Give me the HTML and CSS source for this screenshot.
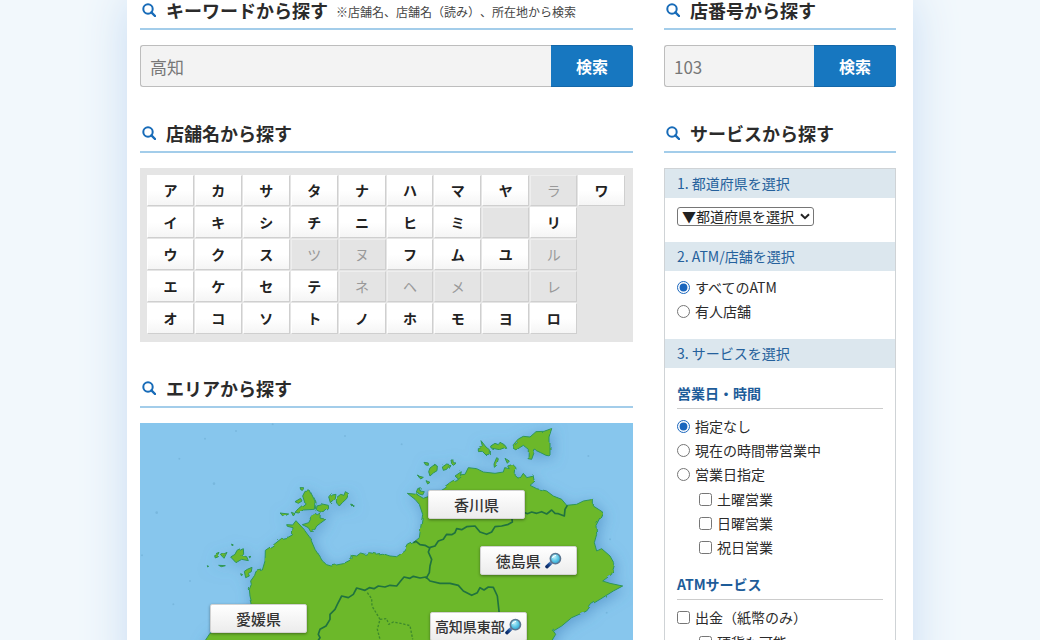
FILE: index.html
```html
<!DOCTYPE html>
<html lang="ja">
<head>
<meta charset="utf-8">
<meta name="viewport" content="width=device-width, initial-scale=1">
<title>店舗・ATM検索</title>
<link rel="stylesheet" href="styles.css">
</head>
<body>
<svg class="defs" width="0" height="0" aria-hidden="true">
  <symbol id="search" viewBox="0 0 14 14">
    <circle cx="6" cy="6" r="4.7" fill="none" stroke="currentColor" stroke-width="2"/>
    <path d="M9.4 9.4 13 13" stroke="currentColor" stroke-width="2.4" stroke-linecap="round"/>
  </symbol>
  <linearGradient id="handle-fill" x1="1" y1="0" x2="0" y2="1">
    <stop offset="0" stop-color="#6d94c8"/><stop offset=".5" stop-color="#174a94"/><stop offset="1" stop-color="#0b2a66"/>
  </linearGradient>
  <radialGradient id="lens-fill" cx=".4" cy=".35" r=".7">
    <stop offset="0" stop-color="#bdf1fb"/><stop offset=".6" stop-color="#55c3e4"/><stop offset="1" stop-color="#2f9fd0"/>
  </radialGradient>
  <symbol id="lens" viewBox="0 0 16 16">
    <path d="M1.8 13.8 6 9.8" stroke="url(#handle-fill)" stroke-width="3.2" stroke-linecap="round"/>
    <circle cx="9.8" cy="6.2" r="4.8" fill="url(#lens-fill)" stroke="#5c7690" stroke-width="1.5"/>
    <path d="M7.2 5.2Q8 3.4 10 3.3" fill="none" stroke="#fff" stroke-width="1" stroke-linecap="round"/>
  </symbol>
</svg>

<main class="page">
  <div class="column">
    <section>
      <h2 class="heading"><svg class="heading-icon"><use href="#search"/></svg><label for="keyword">キーワードから探す</label><small class="note">※店舗名、店舗名（読み）、所在地から検索</small></h2>
      <form class="search">
        <input class="search-input" id="keyword" type="text" placeholder="高知">
        <button class="search-button" type="button">検索</button>
      </form>
    </section>

    <section>
      <h2 class="heading"><svg class="heading-icon"><use href="#search"/></svg>店舗名から探す</h2>
      <div class="kana">
        <a class="key" href="#">ア</a><a class="key" href="#">カ</a><a class="key" href="#">サ</a><a class="key" href="#">タ</a><a class="key" href="#">ナ</a><a class="key" href="#">ハ</a><a class="key" href="#">マ</a><a class="key" href="#">ヤ</a><span class="key off">ラ</span><a class="key" href="#">ワ</a>
        <a class="key" href="#">イ</a><a class="key" href="#">キ</a><a class="key" href="#">シ</a><a class="key" href="#">チ</a><a class="key" href="#">ニ</a><a class="key" href="#">ヒ</a><a class="key" href="#">ミ</a><span class="key off"></span><a class="key" href="#">リ</a><span></span>
        <a class="key" href="#">ウ</a><a class="key" href="#">ク</a><a class="key" href="#">ス</a><span class="key off">ツ</span><span class="key off">ヌ</span><a class="key" href="#">フ</a><a class="key" href="#">ム</a><a class="key" href="#">ユ</a><span class="key off">ル</span><span></span>
        <a class="key" href="#">エ</a><a class="key" href="#">ケ</a><a class="key" href="#">セ</a><a class="key" href="#">テ</a><span class="key off">ネ</span><span class="key off">ヘ</span><span class="key off">メ</span><span class="key off"></span><span class="key off">レ</span><span></span>
        <a class="key" href="#">オ</a><a class="key" href="#">コ</a><a class="key" href="#">ソ</a><a class="key" href="#">ト</a><a class="key" href="#">ノ</a><a class="key" href="#">ホ</a><a class="key" href="#">モ</a><a class="key" href="#">ヨ</a><a class="key" href="#">ロ</a><span></span>
      </div>
    </section>

    <section>
      <h2 class="heading"><svg class="heading-icon"><use href="#search"/></svg>エリアから探す</h2>
      <div class="map">
        <svg class="map-art" viewBox="30 191 1479 780" aria-hidden="true">
          <defs>
            <filter id="shade" x="-10%" y="-10%" width="120%" height="120%">
              <feTurbulence type="fractalNoise" baseFrequency=".04" numOctaves="1" seed="4" result="n"/>
              <feDisplacementMap in="SourceGraphic" in2="n" scale="10" result="land"/>
              <feGaussianBlur in="land" stdDeviation="20" result="b"/>
              <feOffset in="b" dx="6" dy="8" result="o"/>
              <feFlood flood-color="#4684bd" flood-opacity=".6"/>
              <feComposite in2="o" operator="in" result="s"/>
              <feMerge><feMergeNode in="s"/><feMergeNode in="land"/></feMerge>
            </filter>
          </defs>
          <rect x="30" y="191" width="1479" height="780" fill="#87c6ed"/>
          <g fill="#6faed4" opacity=".6">
            <circle cx="252" cy="373" r="4"/><circle cx="80" cy="460" r="4"/><circle cx="318" cy="215" r="3"/><circle cx="148" cy="298" r="3"/><circle cx="225" cy="238" r="3"/><circle cx="428" cy="195" r="3"/><circle cx="36" cy="588" r="3"/><circle cx="130" cy="735" r="3"/><circle cx="645" cy="230" r="3"/><circle cx="815" cy="255" r="3"/><circle cx="1440" cy="540" r="3"/><circle cx="1375" cy="290" r="3"/><circle cx="1430" cy="760" r="3"/><circle cx="180" cy="665" r="3"/>
          </g>
          <g filter="url(#shade)">
            <path fill="#6cb82c" stroke="#2f9657" stroke-width="3" stroke-linejoin="round" d="M190 990 215 860 240 822 300 800 345 770 366 735 360 710 358 690 364 675 362 665 374 648 378 636 397 632 405 605 406 573 430 557 455 537 476 533 487 527 489 505 472 501 470 496 488 497 498 484 507 494 520 508 540 535 555 570 579 607 590 616 603 620 640 613 665 600 667 588 680 590 692 581 705 585 718 580 740 584 755 582 780 590 800 592 825 575 835 557 850 550 868 535 872 505 878 465 868 435 855 420 832 402 860 405 880 417 900 410 940 385 965 366 980 360 985 347 1005 345 1015 325 1040 328 1060 338 1095 342 1120 338 1124 325 1138 328 1133 320 1148 315 1158 325 1155 348 1168 360 1180 342 1190 355 1212 350 1215 365 1200 378 1220 388 1250 395 1270 410 1295 420 1310 438 1340 435 1360 425 1390 420 1390 440 1418 458 1410 475 1398 498 1400 525 1393 550 1400 575 1415 568 1440 590 1454 615 1445 645 1418 665 1440 672 1478 680 1450 695 1410 720 1385 735 1370 755 1325 775 1295 800 1270 815 1277 825 1265 845 1240 900 1210 990Z"/>
            <g fill="#6cb82c" stroke="#2f9657" stroke-width="3" stroke-linejoin="round">
              <path d="M525 396 540 395 555 425 553 450 520 452 505 461 495 459 505 448 525 432 518 410ZM495 427 512 417 516 425 505 432ZM507 382 518 382 520 390 510 389ZM450 461 476 464 460 472ZM484 459 495 463 490 470ZM558 437 572 433 595 438 596 448 582 460 568 457 556 448ZM596 412 604 404 615 402 612 420 601 430ZM618 416 632 405 642 408 646 397 656 403 650 418 637 430 628 440 620 431ZM662 434 670 437 665 440ZM540 468 553 461 562 466 571 461 570 476 587 480 572 491 560 500 552 515 542 517 535 505 517 496 536 490 541 481Z"/>
              <path d="M302 593 315 585 321 573 337 565 338 582 332 587 350 592 355 604 335 600 318 610ZM254 589 270 582 265 592 256 596ZM274 588 291 579 282 597ZM266 618 286 619 274 622ZM305 554 310 557 306 559ZM232 619 236 621 233 623ZM357 591 366 595 360 599ZM343 636 352 630 366 624 364 637 355 642 358 650 347 655ZM332 643 338 646 334 649Z"/>
              <path d="M1150 256 1165 239 1180 231 1200 233 1218 217 1242 216 1264 208 1268 211 1260 236 1260 290 1248 288 1232 280 1215 272 1205 300 1194 298 1195 270 1180 258 1158 272 1149 266ZM1082 260 1095 252 1105 256 1110 249 1123 256 1127 264 1108 271 1083 266ZM1045 268 1058 264 1053 244 1068 263 1078 271 1078 284 1068 287 1057 276 1045 277ZM1100 295 1105 298 1100 318 1093 324 1092 314ZM1125 297 1138 305 1132 312Z"/>
              <path d="M900 326 912 317 922 320 921 334 910 341 900 350 896 337ZM882 309 895 311 895 318 887 317ZM937 323 950 314 960 316 950 330 940 333ZM960 299 968 299 970 310 979 311 970 318 962 310ZM865 350 880 354 872 359ZM888 364 900 369 893 374ZM975 350 994 337 991 350 982 356ZM866 391 874 388 870 395 883 397 878 407 862 402Z"/>
            </g>
          </g>
          <g fill="none" stroke="#20723f" stroke-width="5" stroke-linejoin="round">
            <path d="M850 550 858 546 870 556 885 558 898 565 915 560 925 545 940 540 950 525 965 526 975 520 980 508 995 511 1010 502 1035 500 1050 518 1070 525 1085 518 1095 502 1115 500 1135 495 1147 488 1145 470M1145 468 1165 465 1180 458 1192 463 1205 458 1220 462 1235 457 1250 464 1265 452 1275 462 1285 463 1303 470 1305 450 1312 438M900 565 895 578 905 600 900 620 898 640 888 658"/>
            <path d="M560 850 570 835 565 825 570 810 588 800 600 780 600 765 615 750 622 735 635 710 655 715 670 705 680 686 705 693 718 685 732 688 745 680 765 683 780 678 800 680 812 665 822 653 840 657 850 651 870 656 888 653 900 665 930 672 960 672 985 678 1000 695 1025 708 1042 700 1050 685 1062 692 1075 683 1090 684 1102 710 1107 755 1110 800"/>
            <path stroke="#3d8a2c" stroke-width="4" stroke-dasharray="7 5" d="M712 700 725 718 726 740 738 760 750 780 742 810 750 840 738 880M750 780 770 778 776 795 790 788 812 792 840 799 848 840"/>
          </g>
        </svg>
        <a class="area kagawa" href="#">香川県</a>
        <a class="area tokushima" href="#">徳島県<svg class="lens"><use href="#lens"/></svg></a>
        <a class="area ehime" href="#">愛媛県</a>
        <a class="area kochi" href="#">高知県東部<svg class="lens"><use href="#lens"/></svg></a>
      </div>
    </section>
  </div>

  <div class="column side">
    <section>
      <h2 class="heading"><svg class="heading-icon"><use href="#search"/></svg><label for="number">店番号から探す</label></h2>
      <form class="search">
        <input class="search-input" id="number" type="text" placeholder="103">
        <button class="search-button" type="button">検索</button>
      </form>
    </section>

    <section>
      <h2 class="heading"><svg class="heading-icon"><use href="#search"/></svg>サービスから探す</h2>
      <form class="panel">
        <h3 class="step"><label for="pref">1. 都道府県を選択</label></h3>
        <div class="select-row">
          <div class="select-wrap">
            <select class="pref" id="pref"><option>▼都道府県を選択</option></select>
            <svg class="chevron" viewBox="0 0 10 7" aria-hidden="true"><path d="M1 1.2 5 5.2 9 1.2" fill="none" stroke="#222" stroke-width="2"/></svg>
          </div>
        </div>
        <h3 class="step">2. ATM/店舗を選択</h3>
        <div class="options kinds">
          <label class="option"><input type="radio" name="kind" checked>すべてのATM</label>
          <label class="option"><input type="radio" name="kind">有人店舗</label>
        </div>
        <h3 class="step">3. サービスを選択</h3>
        <div class="group">
          <h4 class="group-title">営業日・時間</h4>
          <div class="options">
            <label class="option"><input type="radio" name="hours" checked>指定なし</label>
            <label class="option"><input type="radio" name="hours">現在の時間帯営業中</label>
            <label class="option"><input type="radio" name="hours">営業日指定</label>
            <div class="suboptions">
              <label class="option"><input type="checkbox">土曜営業</label>
              <label class="option"><input type="checkbox">日曜営業</label>
              <label class="option"><input type="checkbox">祝日営業</label>
            </div>
          </div>
        </div>
        <div class="group">
          <h4 class="group-title">ATMサービス</h4>
          <div class="options">
            <label class="option"><input type="checkbox">出金（紙幣のみ）</label>
            <div class="suboptions">
              <label class="option"><input type="checkbox">硬貨も可能</label>
            </div>
          </div>
        </div>
      </form>
    </section>
  </div>
</main>
</body>
</html>
```
FILE: styles.css
```css
* { box-sizing: border-box; }

body {
  margin: 0;
  height: 100vh;
  overflow: hidden;
  background: #f2f8fc;
  color: #2b2b2b;
  font-family: "Noto Sans CJK JP", sans-serif;
  font-size: 14px;
  text-spacing-trim: space-all;
}

h2, h3, h4 { margin: 0; }

.defs { position: absolute; }

.page {
  display: flex;
  gap: 31px;
  max-width: 786px;
  min-height: 100vh;
  margin: 0 auto;
  padding: 0 17px 0 13px;
  background: #fff;
  box-shadow: 0 0 44px #c8dcf3;
}

.column {
  display: flex;
  flex: 1;
  flex-direction: column;
  gap: 36px;
  min-width: 0;
}

.side { flex: 0 0 232px; }

.heading {
  display: flex;
  align-items: center;
  margin-bottom: 15px;
  padding: 0 0 8px 2px;
  border-bottom: 2px solid #a3cdea;
  font-size: 18px;
  line-height: 20px;
  white-space: nowrap;
}

.heading-icon {
  width: 14px;
  height: 14px;
  margin-right: 10px;
  color: #176bb8;
}

.note {
  margin: 4px 0 0 8px;
  color: #444;
  font-size: 12px;
  font-weight: 400;
  line-height: 16px;
}

.search { display: flex; height: 42px; }

.search-input {
  flex: 1;
  min-width: 0;
  padding: 0 9px;
  border: 1px solid #bdbdbd;
  border-right: 0;
  border-radius: 3px 0 0 3px;
  background: #f3f3f3;
  color: #777;
  font: inherit;
  font-size: 17px;
}

.search-input::placeholder { color: #777; }

.search-button {
  width: 82px;
  border: 1px solid #1467a8;
  border-width: 1px 0;
  border-radius: 0 3px 3px 0;
  background: #1777c0;
  color: #fff;
  font: inherit;
  font-size: 16px;
  font-weight: 700;
}

.kana {
  display: grid;
  grid-template-columns: repeat(10, 1fr);
  grid-auto-rows: 32px;
  padding: 7px;
  background: #e5e5e5;
}

.key {
  border: 1px solid #fff;
  border-right-color: #cfcfcf;
  border-bottom-color: #cfcfcf;
  margin: 0 1px 1px 0;
  background: linear-gradient(#fff 50%, #f5f5f5);
  color: #222;
  font-size: 14px;
  font-weight: 700;
  line-height: 28px;
  text-align: center;
  text-decoration: none;
}

.off {
  border-top-color: #eee;
  border-left-color: #eee;
  background: #e4e4e4;
  color: #999;
  font-weight: 400;
}

.map { position: relative; }

.map-art { display: block; width: 100%; }

.area {
  position: absolute;
  display: flex;
  align-items: center;
  justify-content: center;
  width: 97px;
  height: 29px;
  border: 1px solid #d2d2d2;
  border-radius: 2px;
  background: linear-gradient(#fff, #ececec);
  box-shadow: 0 1px 3px #0006;
  color: #333;
  font-size: 15px;
  font-weight: 500;
  text-decoration: none;
  white-space: nowrap;
}

.lens { width: 17px; height: 17px; }

.kagawa { left: 58.4%; top: 25.7%; }
.tokushima { left: 69%; top: 47.3%; }
.tokushima .lens { margin-left: 4px; }
.ehime { left: 14.2%; top: 69.8%; }
.kochi { left: 58.8%; top: 72.6%; font-size: 14px; }

.panel {
  border: 1px solid #cfd3d6;
}

.step {
  padding: 0 12px;
  background: #dce7ee;
  color: #25619c;
  font-size: 14px;
  font-weight: 400;
  line-height: 29px;
}

.select-row { padding: 9px 12px 16px; }

.select-wrap { position: relative; width: 137px; }

.pref {
  display: block;
  width: 100%;
  height: 19px;
  padding: 0 0 0 4px;
  border: 1px solid #767676;
  border-radius: 3px;
  background: #fff;
  color: #222;
  font: inherit;
  line-height: 17px;
  appearance: none;
}

.chevron {
  position: absolute;
  top: 6px;
  right: 4px;
  width: 10px;
  height: 7px;
  pointer-events: none;
}

.option {
  display: flex;
  align-items: center;
  height: 24px;
}

.option input {
  width: 13px;
  height: 13px;
  margin: 0 5px 0 0;
  accent-color: #1a66bd;
}

.kinds { padding: 4px 12px 16px; }

.suboptions { padding: 1px 0 0 22px; }

.group { padding: 14px 12px 0; }

.group-title {
  margin-bottom: 5px;
  padding-bottom: 4px;
  border-bottom: 1px solid #ccc;
  color: #1d5c99;
  font-size: 14px;
  line-height: 22px;
}
```
